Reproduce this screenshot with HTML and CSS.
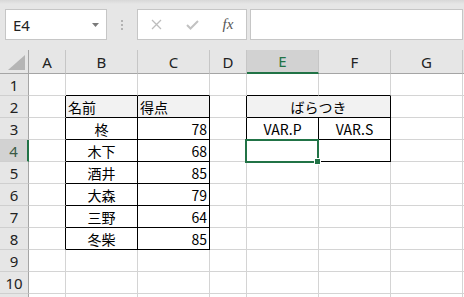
FILE: index.html
```html
<!DOCTYPE html>
<html lang="ja">
<head>
    <meta charset="UTF-8">
    <title>Book1 - Excel</title>
    <link rel="stylesheet" href="styles.css">
</head>
<body>
    <div class="toolbar">
        <div class="namebox">
            <span>E4</span>
            <svg width="7" height="4" viewBox="0 0 7 4"><polygon points="0,0 7,0 3.5,4" fill="#7a7a7a"/></svg>
        </div>
        <div class="grip">
            <svg width="2" height="10" viewBox="0 0 2 10">
                <rect x="0" y="0" width="2" height="2" fill="#b3b3b3"/>
                <rect x="0" y="4" width="2" height="2" fill="#b3b3b3"/>
                <rect x="0" y="8" width="2" height="2" fill="#b3b3b3"/>
            </svg>
        </div>
        <div class="fxbox">
            <div class="fxbtn">
                <svg width="11" height="11" viewBox="0 0 11 11"><path d="M1 1 L10 10 M10 1 L1 10" stroke="#bdbdbd" stroke-width="1.3" fill="none"/></svg>
            </div>
            <div class="fxbtn">
                <svg width="13" height="10" viewBox="0 0 13 10"><path d="M1 5 L4.5 8.5 L12 1" stroke="#c2c2c2" stroke-width="2" fill="none"/></svg>
            </div>
            <div class="fxbtn"><span class="fx">fx</span></div>
        </div>
        <div class="formula"></div>
    </div>

    <div class="sheet">
        <div class="row colhead">
            <div class="c ch corner">
                <svg width="17" height="15" viewBox="0 0 17 15"><polygon points="17,0 17,15 0,15" fill="#b5b5b5"/></svg>
            </div>
            <div class="c ch">A</div>
            <div class="c ch">B</div>
            <div class="c ch">C</div>
            <div class="c ch">D</div>
            <div class="c ch active">E</div>
            <div class="c ch">F</div>
            <div class="c ch">G</div>
            <div class="c ch"></div>
        </div>
        <div class="row">
            <div class="c rh">1</div>
            <div class="c"></div>
            <div class="c tt"></div>
            <div class="c tt"></div>
            <div class="c"></div>
            <div class="c tt"></div>
            <div class="c tt"></div>
            <div class="c"></div>
            <div class="c"></div>
        </div>
        <div class="row">
            <div class="c rh">2</div>
            <div class="c tl"></div>
            <div class="c t hd">名前</div>
            <div class="c t hd">得点</div>
            <div class="c tl"></div>
            <div class="c t hd mid span2">ばらつき</div>
            <div class="c"></div>
            <div class="c"></div>
        </div>
        <div class="row">
            <div class="c rh">3</div>
            <div class="c tl"></div>
            <div class="c t mid">柊</div>
            <div class="c t num">78</div>
            <div class="c tl"></div>
            <div class="c t mid">VAR.P</div>
            <div class="c t mid">VAR.S</div>
            <div class="c"></div>
            <div class="c"></div>
        </div>
        <div class="row">
            <div class="c rh active">4</div>
            <div class="c tl"></div>
            <div class="c t mid">木下</div>
            <div class="c t num">68</div>
            <div class="c tl"></div>
            <div class="c t selected"><div class="sel-box"><div class="handle"></div></div></div>
            <div class="c t"></div>
            <div class="c"></div>
            <div class="c"></div>
        </div>
        <div class="row">
            <div class="c rh">5</div>
            <div class="c tl"></div>
            <div class="c t mid">酒井</div>
            <div class="c t num">85</div>
            <div class="c"></div>
            <div class="c"></div>
            <div class="c"></div>
            <div class="c"></div>
            <div class="c"></div>
        </div>
        <div class="row">
            <div class="c rh">6</div>
            <div class="c tl"></div>
            <div class="c t mid">大森</div>
            <div class="c t num">79</div>
            <div class="c"></div>
            <div class="c"></div>
            <div class="c"></div>
            <div class="c"></div>
            <div class="c"></div>
        </div>
        <div class="row">
            <div class="c rh">7</div>
            <div class="c tl"></div>
            <div class="c t mid">三野</div>
            <div class="c t num">64</div>
            <div class="c"></div>
            <div class="c"></div>
            <div class="c"></div>
            <div class="c"></div>
            <div class="c"></div>
        </div>
        <div class="row">
            <div class="c rh">8</div>
            <div class="c tl"></div>
            <div class="c t mid">冬柴</div>
            <div class="c t num">85</div>
            <div class="c"></div>
            <div class="c"></div>
            <div class="c"></div>
            <div class="c"></div>
            <div class="c"></div>
        </div>
        <div class="row">
            <div class="c rh">9</div>
            <div class="c"></div>
            <div class="c"></div>
            <div class="c"></div>
            <div class="c"></div>
            <div class="c"></div>
            <div class="c"></div>
            <div class="c"></div>
            <div class="c"></div>
        </div>
        <div class="row">
            <div class="c rh">10</div>
            <div class="c"></div>
            <div class="c"></div>
            <div class="c"></div>
            <div class="c"></div>
            <div class="c"></div>
            <div class="c"></div>
            <div class="c"></div>
            <div class="c"></div>
        </div>
        <div class="row">
            <div class="c rh"></div>
            <div class="c"></div>
            <div class="c"></div>
            <div class="c"></div>
            <div class="c"></div>
            <div class="c"></div>
            <div class="c"></div>
            <div class="c"></div>
            <div class="c"></div>
        </div>
    </div>
</body>
</html>
```

FILE: styles.css
```css
* {
    box-sizing: border-box;
}
html, body {
    margin: 0;
    height: 297px;
    overflow: hidden;
}
body {
    background: #fff;
    font-family: "Noto Sans CJK JP", sans-serif;
    font-size: 14px;
    color: #000;
}

/* barra de formula */
.toolbar {
    height: 50px;
    display: flex;
    align-items: flex-start;
    padding-top: 9px;
    background: linear-gradient(#d8d8d8, #e6e6e6 4px);
}
.namebox {
    margin-left: 5px;
    width: 102px;
    height: 31px;
    border: 1px solid #c6c6c6;
    background: #fff;
    display: flex;
    align-items: center;
    justify-content: space-between;
    padding: 0 7px 0 7px;
    font-family: "Noto Sans", sans-serif;
    font-size: 15px;
    color: #222;
}
.grip {
    width: 30px;
    height: 31px;
    display: flex;
    align-items: center;
    justify-content: center;
}
.fxbox {
    width: 110px;
    height: 31px;
    border: 1px solid #c6c6c6;
    background: #fff;
    display: flex;
    align-items: center;
}
.fxbtn {
    width: 36px;
    display: flex;
    justify-content: center;
    align-items: center;
}
.fx {
    font-family: "Liberation Serif", serif;
    font-style: italic;
    font-size: 15px;
    color: #555;
}
.formula {
    flex: 1;
    height: 31px;
    margin: 0 1px 0 3px;
    border: 1px solid #c6c6c6;
    background: #fff;
}

/* planilha */
.row {
    display: grid;
    grid-template-columns: 29px 37px 72px 72px 37px 72px 72px 72px 1fr;
    height: 22px;
}
.row.colhead {
    height: 24px;
}
.c {
    border-right: 1px solid #d4d4d4;
    border-bottom: 1px solid #d4d4d4;
    display: flex;
    align-items: center;
    padding: 0 2px;
    white-space: nowrap;
}
.ch {
    background: #e6e6e6;
    border-right-color: #c6c6c6;
    border-bottom-color: #a5a5a5;
    justify-content: center;
    font-family: "Noto Sans", sans-serif;
    font-size: 15px;
    color: #222;
}
.ch.corner {
    justify-content: flex-end;
    align-items: flex-end;
    padding: 0 3px 3px 0;
    border-right-color: #a5a5a5;
}
.ch.active {
    background: #d2d2d2;
    border-bottom: 2px solid #217346;
    color: #217346;
}
.rh {
    background: #e6e6e6;
    border-right-color: #a5a5a5;
    border-bottom-color: #cfcfcf;
    justify-content: center;
    font-family: "Noto Sans", sans-serif;
    font-size: 15px;
    color: #222;
}
.rh.active {
    background: #d2d2d2;
    border-right: 2px solid #217346;
    color: #3a5a46;
}

/* bordas da tabela */
.t {
    border-right-color: #000;
    border-bottom-color: #000;
}
.tl {
    border-right-color: #000;
}
.tt {
    border-bottom-color: #000;
}
.hd {
    background: #f2f2f2;
}
.mid {
    justify-content: center;
}
.num {
    justify-content: flex-end;
}
.span2 {
    grid-column: span 2;
}

/* celula selecionada */
.selected {
    position: relative;
}
.sel-box {
    position: absolute;
    left: -2px;
    top: -1px;
    right: -1px;
    bottom: -2px;
    border: 2px solid #217346;
    z-index: 2;
}
.handle {
    position: absolute;
    right: -4px;
    bottom: -4px;
    width: 7px;
    height: 7px;
    background: #217346;
    border: 1px solid #fff;
}
```
